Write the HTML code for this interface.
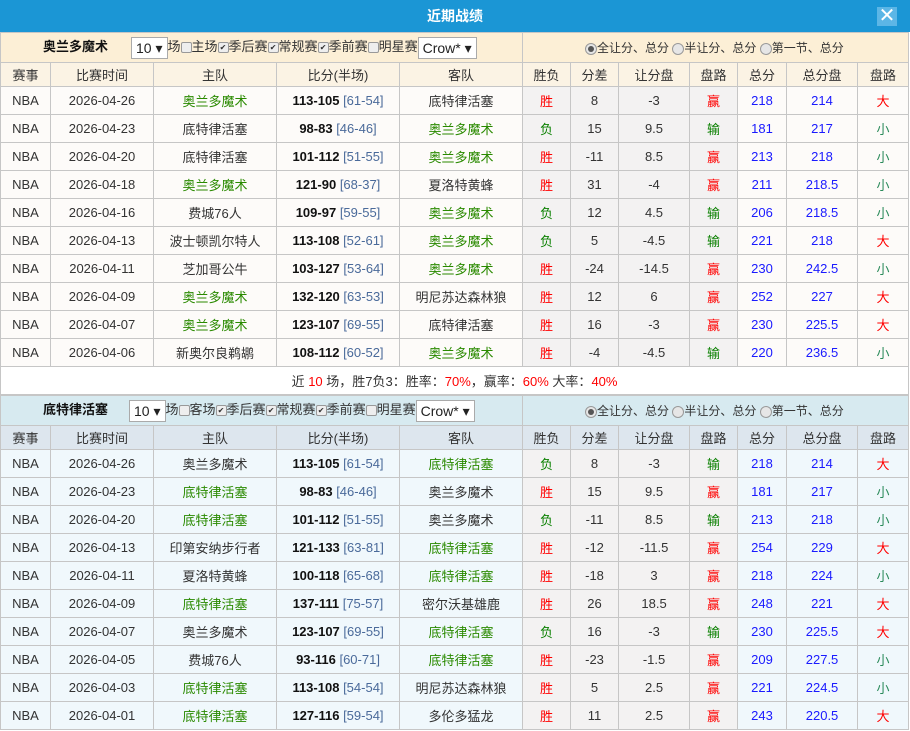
<!DOCTYPE html>
<html><head><meta charset="utf-8"><style>
*{margin:0;padding:0;box-sizing:border-box}
body{width:910px;height:731px;overflow:hidden;background:#fff;font-family:"Liberation Sans","Noto Sans CJK SC",sans-serif;font-size:13px;color:#333}
.title{height:32px;background:#1b96d5;color:#fff;font-weight:bold;font-size:14px;text-align:center;line-height:32px;position:relative}
.x{position:absolute;left:877px;top:7px;width:20px;height:19px;background:#5cb6e6;color:#fff;font-size:20px;line-height:19px;text-align:center;font-weight:normal}
table{border-collapse:collapse;table-layout:fixed;width:908px}
td{border:1px solid #c6c6c6;text-align:center;height:28px;white-space:nowrap;overflow:hidden;padding:0}
.f td{height:30px;font-size:13px;color:#333}
.f td.rt{font-size:12px}
.h td{height:24px}
.t1 .f td{background:#fcefd6}
.t1 .h td{background:#fbf3e4}
.t1 tr.r td{background:#fdfbf9}
.t2 .f td{background:#d7eaf0}
.t2 .h td{background:#dde6ee}
.t2 tr.r td{background:#f0f8fc}
.t1 tr.r td.g,.t2 tr.r td.g{background:#f3f2f2}
.sel{display:inline-block;border:1px solid #aaa;background:#fff;height:22px;line-height:20px;padding:0 4px;font-size:14px;vertical-align:middle;color:#222}
.cb{display:inline-block;width:11px;height:11px;border:1px solid #999;background:#eee;border-radius:2px;vertical-align:middle;font-size:8px;line-height:9px;text-align:center;color:#333}
.rd{display:inline-block;width:12px;height:12px;border:1px solid #999;background:#e6e6e6;border-radius:50%;vertical-align:middle;position:relative}
.rd.on::after{content:"";position:absolute;left:2px;top:2px;width:6px;height:6px;border-radius:50%;background:#555}
.gr{color:#2a8a00}.rd2{color:#f00}.bl{color:#1a1aff}.hs{color:#4a6a9a}.dg{color:#0a8000}.tl{color:#2a8a5a}
b{color:#111}
.sum td{height:28px;background:#fff;color:#333}
</style></head><body>
<div class="title">近期战绩<div class="x">✕</div></div>
<table class="t1">
<colgroup><col style="width:50px"><col style="width:103px"><col style="width:123px"><col style="width:123px"><col style="width:123px"><col style="width:48px"><col style="width:48px"><col style="width:71px"><col style="width:48px"><col style="width:49px"><col style="width:71px"><col style="width:51px"></colgroup>
<tr class="f"><td colspan="5" style="text-align:left;padding-left:42px"><b style="display:inline-block;width:88px">奥兰多魔术</b><span class="sel">10 ▾</span>场<span class="cb"></span>主场<span class="cb">✔</span>季后赛<span class="cb">✔</span>常规赛<span class="cb">✔</span>季前赛<span class="cb"></span>明星赛<span class="sel">Crow* ▾</span></td><td colspan="7" class="rt" style="text-align:left;padding-left:62px"><span class="rd on"></span>全让分、总分 <span class="rd"></span>半让分、总分 <span class="rd"></span>第一节、总分</td></tr>
<tr class="h"><td>赛事</td><td>比赛时间</td><td>主队</td><td>比分(半场)</td><td>客队</td><td>胜负</td><td>分差</td><td>让分盘</td><td>盘路</td><td>总分</td><td>总分盘</td><td>盘路</td></tr>
<tr class="r"><td>NBA</td><td>2026-04-26</td><td class="gr">奥兰多魔术</td><td><b>113-105</b> <span class="hs">[61-54]</span></td><td>底特律活塞</td><td class="g rd2">胜</td><td class="g">8</td><td class="g">-3</td><td class="g rd2">赢</td><td class="bl">218</td><td class="bl">214</td><td class="rd2">大</td></tr>
<tr class="r"><td>NBA</td><td>2026-04-23</td><td>底特律活塞</td><td><b>98-83</b> <span class="hs">[46-46]</span></td><td class="gr">奥兰多魔术</td><td class="g dg">负</td><td class="g">15</td><td class="g">9.5</td><td class="g dg">输</td><td class="bl">181</td><td class="bl">217</td><td class="tl">小</td></tr>
<tr class="r"><td>NBA</td><td>2026-04-20</td><td>底特律活塞</td><td><b>101-112</b> <span class="hs">[51-55]</span></td><td class="gr">奥兰多魔术</td><td class="g rd2">胜</td><td class="g">-11</td><td class="g">8.5</td><td class="g rd2">赢</td><td class="bl">213</td><td class="bl">218</td><td class="tl">小</td></tr>
<tr class="r"><td>NBA</td><td>2026-04-18</td><td class="gr">奥兰多魔术</td><td><b>121-90</b> <span class="hs">[68-37]</span></td><td>夏洛特黄蜂</td><td class="g rd2">胜</td><td class="g">31</td><td class="g">-4</td><td class="g rd2">赢</td><td class="bl">211</td><td class="bl">218.5</td><td class="tl">小</td></tr>
<tr class="r"><td>NBA</td><td>2026-04-16</td><td>费城76人</td><td><b>109-97</b> <span class="hs">[59-55]</span></td><td class="gr">奥兰多魔术</td><td class="g dg">负</td><td class="g">12</td><td class="g">4.5</td><td class="g dg">输</td><td class="bl">206</td><td class="bl">218.5</td><td class="tl">小</td></tr>
<tr class="r"><td>NBA</td><td>2026-04-13</td><td>波士顿凯尔特人</td><td><b>113-108</b> <span class="hs">[52-61]</span></td><td class="gr">奥兰多魔术</td><td class="g dg">负</td><td class="g">5</td><td class="g">-4.5</td><td class="g dg">输</td><td class="bl">221</td><td class="bl">218</td><td class="rd2">大</td></tr>
<tr class="r"><td>NBA</td><td>2026-04-11</td><td>芝加哥公牛</td><td><b>103-127</b> <span class="hs">[53-64]</span></td><td class="gr">奥兰多魔术</td><td class="g rd2">胜</td><td class="g">-24</td><td class="g">-14.5</td><td class="g rd2">赢</td><td class="bl">230</td><td class="bl">242.5</td><td class="tl">小</td></tr>
<tr class="r"><td>NBA</td><td>2026-04-09</td><td class="gr">奥兰多魔术</td><td><b>132-120</b> <span class="hs">[63-53]</span></td><td>明尼苏达森林狼</td><td class="g rd2">胜</td><td class="g">12</td><td class="g">6</td><td class="g rd2">赢</td><td class="bl">252</td><td class="bl">227</td><td class="rd2">大</td></tr>
<tr class="r"><td>NBA</td><td>2026-04-07</td><td class="gr">奥兰多魔术</td><td><b>123-107</b> <span class="hs">[69-55]</span></td><td>底特律活塞</td><td class="g rd2">胜</td><td class="g">16</td><td class="g">-3</td><td class="g rd2">赢</td><td class="bl">230</td><td class="bl">225.5</td><td class="rd2">大</td></tr>
<tr class="r"><td>NBA</td><td>2026-04-06</td><td>新奥尔良鹈鹕</td><td><b>108-112</b> <span class="hs">[60-52]</span></td><td class="gr">奥兰多魔术</td><td class="g rd2">胜</td><td class="g">-4</td><td class="g">-4.5</td><td class="g dg">输</td><td class="bl">220</td><td class="bl">236.5</td><td class="tl">小</td></tr>
<tr class="sum"><td colspan="12">近 <span class="rd2">10</span> 场，胜7负3：胜率：<span class="rd2">70%</span>，赢率：<span class="rd2">60%</span> 大率：<span class="rd2">40%</span></td></tr>
</table>
<table class="t2">
<colgroup><col style="width:50px"><col style="width:103px"><col style="width:123px"><col style="width:123px"><col style="width:123px"><col style="width:48px"><col style="width:48px"><col style="width:71px"><col style="width:48px"><col style="width:49px"><col style="width:71px"><col style="width:51px"></colgroup>
<tr class="f"><td colspan="5" style="text-align:left;padding-left:42px"><b style="display:inline-block;width:86px">底特律活塞</b><span class="sel">10 ▾</span>场<span class="cb"></span>客场<span class="cb">✔</span>季后赛<span class="cb">✔</span>常规赛<span class="cb">✔</span>季前赛<span class="cb"></span>明星赛<span class="sel">Crow* ▾</span></td><td colspan="7" class="rt" style="text-align:left;padding-left:62px"><span class="rd on"></span>全让分、总分 <span class="rd"></span>半让分、总分 <span class="rd"></span>第一节、总分</td></tr>
<tr class="h"><td>赛事</td><td>比赛时间</td><td>主队</td><td>比分(半场)</td><td>客队</td><td>胜负</td><td>分差</td><td>让分盘</td><td>盘路</td><td>总分</td><td>总分盘</td><td>盘路</td></tr>
<tr class="r"><td>NBA</td><td>2026-04-26</td><td>奥兰多魔术</td><td><b>113-105</b> <span class="hs">[61-54]</span></td><td class="gr">底特律活塞</td><td class="g dg">负</td><td class="g">8</td><td class="g">-3</td><td class="g dg">输</td><td class="bl">218</td><td class="bl">214</td><td class="rd2">大</td></tr>
<tr class="r"><td>NBA</td><td>2026-04-23</td><td class="gr">底特律活塞</td><td><b>98-83</b> <span class="hs">[46-46]</span></td><td>奥兰多魔术</td><td class="g rd2">胜</td><td class="g">15</td><td class="g">9.5</td><td class="g rd2">赢</td><td class="bl">181</td><td class="bl">217</td><td class="tl">小</td></tr>
<tr class="r"><td>NBA</td><td>2026-04-20</td><td class="gr">底特律活塞</td><td><b>101-112</b> <span class="hs">[51-55]</span></td><td>奥兰多魔术</td><td class="g dg">负</td><td class="g">-11</td><td class="g">8.5</td><td class="g dg">输</td><td class="bl">213</td><td class="bl">218</td><td class="tl">小</td></tr>
<tr class="r"><td>NBA</td><td>2026-04-13</td><td>印第安纳步行者</td><td><b>121-133</b> <span class="hs">[63-81]</span></td><td class="gr">底特律活塞</td><td class="g rd2">胜</td><td class="g">-12</td><td class="g">-11.5</td><td class="g rd2">赢</td><td class="bl">254</td><td class="bl">229</td><td class="rd2">大</td></tr>
<tr class="r"><td>NBA</td><td>2026-04-11</td><td>夏洛特黄蜂</td><td><b>100-118</b> <span class="hs">[65-68]</span></td><td class="gr">底特律活塞</td><td class="g rd2">胜</td><td class="g">-18</td><td class="g">3</td><td class="g rd2">赢</td><td class="bl">218</td><td class="bl">224</td><td class="tl">小</td></tr>
<tr class="r"><td>NBA</td><td>2026-04-09</td><td class="gr">底特律活塞</td><td><b>137-111</b> <span class="hs">[75-57]</span></td><td>密尔沃基雄鹿</td><td class="g rd2">胜</td><td class="g">26</td><td class="g">18.5</td><td class="g rd2">赢</td><td class="bl">248</td><td class="bl">221</td><td class="rd2">大</td></tr>
<tr class="r"><td>NBA</td><td>2026-04-07</td><td>奥兰多魔术</td><td><b>123-107</b> <span class="hs">[69-55]</span></td><td class="gr">底特律活塞</td><td class="g dg">负</td><td class="g">16</td><td class="g">-3</td><td class="g dg">输</td><td class="bl">230</td><td class="bl">225.5</td><td class="rd2">大</td></tr>
<tr class="r"><td>NBA</td><td>2026-04-05</td><td>费城76人</td><td><b>93-116</b> <span class="hs">[60-71]</span></td><td class="gr">底特律活塞</td><td class="g rd2">胜</td><td class="g">-23</td><td class="g">-1.5</td><td class="g rd2">赢</td><td class="bl">209</td><td class="bl">227.5</td><td class="tl">小</td></tr>
<tr class="r"><td>NBA</td><td>2026-04-03</td><td class="gr">底特律活塞</td><td><b>113-108</b> <span class="hs">[54-54]</span></td><td>明尼苏达森林狼</td><td class="g rd2">胜</td><td class="g">5</td><td class="g">2.5</td><td class="g rd2">赢</td><td class="bl">221</td><td class="bl">224.5</td><td class="tl">小</td></tr>
<tr class="r"><td>NBA</td><td>2026-04-01</td><td class="gr">底特律活塞</td><td><b>127-116</b> <span class="hs">[59-54]</span></td><td>多伦多猛龙</td><td class="g rd2">胜</td><td class="g">11</td><td class="g">2.5</td><td class="g rd2">赢</td><td class="bl">243</td><td class="bl">220.5</td><td class="rd2">大</td></tr>
</table>
</body></html>
